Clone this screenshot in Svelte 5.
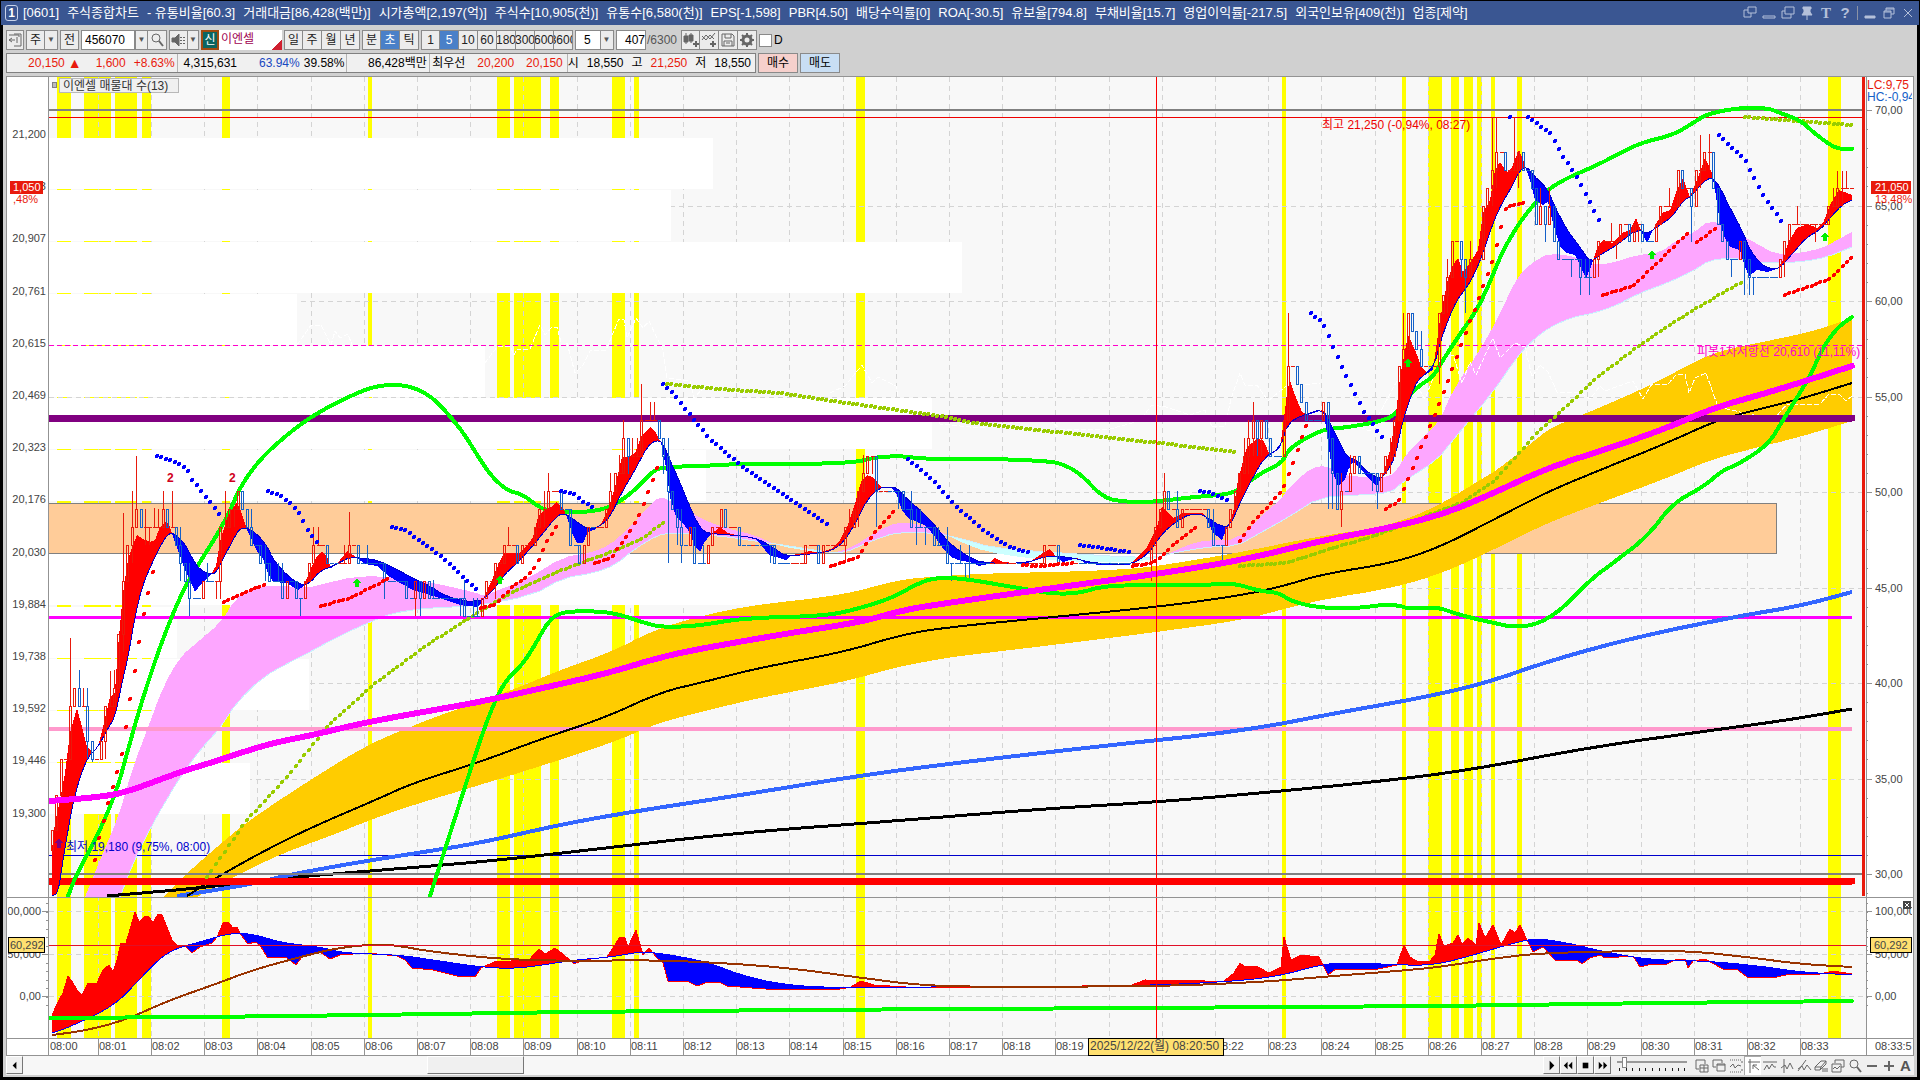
<script lang="ts">
  type Point = [number, number];

  const parse = (text: string): Point[] =>
    text.trim().split(/\s+/).map((pair) => pair.split(",").map(Number) as Point);
  const join = (points: Point[]) => points.map((p) => p.join(",")).join(" ");

  // Cuts the corners twice, so that long averages bend softly.
  const smooth = (points: Point[], rounds = 2): Point[] => {
    if (rounds === 0) return points;
    const result: Point[] = [points[0]];
    for (let i = 1; i < points.length; i++) {
      const [x0, y0] = points[i - 1];
      const [x1, y1] = points[i];
      result.push([x0 * 0.75 + x1 * 0.25, y0 * 0.75 + y1 * 0.25]);
      result.push([x0 * 0.25 + x1 * 0.75, y0 * 0.25 + y1 * 0.75]);
    }
    result.push(points[points.length - 1]);
    return smooth(result, rounds - 1);
  };
  const curve = (text: string) => join(smooth(parse(text)));

  const at = (points: Point[], x: number) => {
    if (x <= points[0][0]) return points[0][1];
    for (let i = 1; i < points.length; i++) {
      const [x0, y0] = points[i - 1];
      const [x1, y1] = points[i];
      if (x <= x1) return y0 + ((y1 - y0) * (x - x0)) / (x1 - x0);
    }
    return points[points.length - 1][1];
  };

  // Areas between a fast and a slow line: one where fast is above, one where it is below.
  const ribbon = (fast: Point[], slow: Point[]) => {
    const up: string[] = [];
    const down: string[] = [];
    const base: string[] = [];
    for (let x = fast[0][0]; x <= 1852; x += 1) {
      const f = at(fast, x);
      const s = at(slow, x);
      up.push(`${x},${Math.min(f, s).toFixed(1)}`);
      down.push(`${x},${Math.max(f, s).toFixed(1)}`);
      base.unshift(`${x},${s.toFixed(1)}`);
    }
    return {
      up: [...up, ...base].join(" "),
      down: [...down, ...base].join(" "),
    };
  };

  const STEP = 4.43;
  const dots = (text: string): Point[] => {
    const points = parse(text);
    const result: Point[] = [];
    for (let x = points[0][0]; x <= points[points.length - 1][0] + 1; x += STEP) {
      result.push([Math.round(x), Math.round(at(points, x))]);
    }
    return result;
  };

  const fast = parse(`52,850 55,823 60,800 65,773 70,733 77,708 82,727 87,747 92,752 98,747 103,727 110,697 115,692 118,647 123,593 128,560
    133,545 137,535 143,539 150,542 155,540 160,527 166,521 170,527 175,542 180,556 185,570 190,580 195,592 198,588 205,580 210,576 216,566 220,542
    227,518 233,508 237,502 242,514 248,532 257,551 263,559 268,573 273,582 287,583 293,587 298,590 303,587 308,576 312,566 317,556 322,552 327,556
    331,568 337,564 347,551 353,555 365,564 377,566 390,577 400,583 413,590 433,596 460,605 477,607 481,603 485,595 492,580 499,563 504,553 511,553
    519,553 526,547 533,537 538,517 544,510 551,507 556,502 563,508 567,517 572,533 577,543 583,543 588,532 594,530 602,522 608,510 615,487 622,457
    629,457 635,453 642,435 651,427 656,433 661,443 666,467 670,497 676,517 683,523 690,533 695,547 700,552 704,543 710,535 720,527 728,533 744,537
    754,538 761,545 769,555 786,560 792,555 804,553 810,551 819,553 831,549 840,540 847,527 854,507 861,482 867,475 874,478 881,487 892,488 897,495
    902,510 908,518 917,522 926,526 935,537 942,547 951,557 961,561 970,562 979,566 988,564 995,558 1003,562 1027,564 1040,555 1050,549 1057,558
    1063,562 1077,558 1085,563 1100,565 1130,565 1137,557 1147,547 1157,527 1162,506 1168,513 1173,518 1183,513 1193,513 1203,513 1208,522 1213,533
    1222,540 1227,528 1233,513 1238,480 1247,447 1257,439 1263,440 1270,455 1280,448 1283,427 1287,393 1290,380 1295,395 1302,412 1308,415 1323,410
    1327,433 1332,470 1338,486 1345,480 1348,470 1353,462 1360,468 1367,477 1377,486 1383,475 1390,450 1395,423 1400,377 1408,335 1415,350 1422,368
    1428,373 1433,370 1440,320 1447,283 1453,265 1458,258 1463,272 1472,260 1478,250 1483,213 1490,200 1495,170 1500,162 1507,172 1512,167 1519,150
    1525,165 1530,180 1535,200 1543,205 1548,202 1553,223 1560,247 1567,253 1575,255 1582,270 1586,278 1591,267 1597,248 1603,240 1613,243 1622,233
    1630,230 1636,218 1642,233 1647,243 1653,230 1662,213 1670,210 1677,190 1683,178 1690,197 1697,180 1705,158 1712,173 1715,190 1720,223 1725,238
    1730,247 1740,250 1745,267 1749,276 1757,270 1767,272 1777,269 1783,260 1788,243 1797,228 1808,224 1817,228 1823,223 1830,205 1839,190 1847,193 1852,195`);
  const slow = smooth(parse(`52,896 58,893 63,860 72,807 80,777 88,757 98,747 107,730 115,717 122,683 128,657 135,617 142,587 152,563 160,547 167,535 172,533
    178,537 185,544 192,558 200,570 212,575 217,571 223,559 233,540 240,528 248,528 258,535 267,546 273,559 282,570 293,580 302,585 310,583 320,571
    333,566 350,557 360,558 377,560 390,566 413,578 430,586 447,597 477,603 492,592 504,575 517,563 531,548 544,532 556,517 563,513 572,518 581,525
    590,530 602,525 611,515 622,492 635,470 647,447 656,440 663,443 669,458 679,480 690,507 697,522 704,532 715,534 744,536 761,540 772,547 786,556
    801,555 819,553 831,551 844,542 856,522 867,500 879,488 890,487 897,488 908,500 920,510 933,523 944,537 954,547 969,557 983,563 1027,563 1043,557
    1057,556 1073,558 1093,563 1130,565 1147,555 1160,537 1168,528 1183,517 1197,513 1207,517 1220,526 1230,526 1240,503 1253,477 1265,457 1280,448
    1288,423 1303,415 1323,409 1330,423 1340,443 1347,457 1357,460 1367,472 1380,479 1387,472 1395,457 1403,420 1412,393 1418,380 1428,372 1435,363
    1440,343 1448,320 1457,300 1467,287 1475,273 1483,253 1493,223 1502,203 1510,190 1520,170 1527,167 1533,175 1547,188 1555,207 1567,230 1580,247
    1590,262 1600,255 1617,245 1637,229 1647,234 1660,225 1672,217 1683,201 1693,195 1702,183 1712,177 1720,187 1730,208 1742,230 1750,250 1760,263
    1770,269 1780,268 1793,253 1807,237 1820,230 1830,218 1842,205 1852,200`), 1);
  const pinkFast = smooth(parse(`85,897 100,860 118,818 133,767 147,730 163,687 180,657 200,640 220,623 237,597 253,588 273,585 307,588 327,583 353,577 377,576
    410,579 443,585 477,593 483,596 504,588 529,578 563,557 590,553 610,545 629,528 647,508 660,496 672,502 690,512 708,522 733,530 754,535 779,546 808,551
    833,553 851,548 876,532 897,522 919,524 940,531 960,542 987,552 1027,558 1060,561 1127,563 1160,558 1187,545 1207,540 1237,540 1260,517 1280,500
    1293,483 1313,467 1327,466 1340,475 1377,478 1390,476 1397,470 1407,453 1427,433 1440,420 1453,390 1480,350 1497,320 1517,277 1533,262 1550,253 1577,257
    1590,265 1613,263 1637,255 1660,253 1677,240 1693,233 1710,220 1727,227 1750,240 1777,255 1800,253 1823,248 1837,240 1852,232`), 1);
  const pinkSlow = smooth(parse(`85,990 120,897 133,863 153,823 180,777 200,750 220,728 237,702 263,677 290,662 310,652 337,637 370,622 393,613 427,608 477,606
    533,595 563,578 594,573 615,565 636,548 658,535 672,533 722,536 761,542 790,546 826,552 844,553 869,542 897,532 933,533 960,538 993,548 1060,553
    1127,557 1160,557 1173,553 1207,547 1237,546 1260,533 1287,518 1320,497 1360,495 1390,493 1403,482 1437,460 1453,440 1493,392 1517,357 1533,340
    1550,327 1573,317 1590,314 1613,307 1640,293 1667,283 1693,271 1710,260 1733,258 1753,262 1783,263 1807,261 1827,257 1852,247`), 1);
  const goldTop = smooth(parse(`163,897 187,873 233,833 260,813 310,780 367,745 410,727 443,714 486,700 529,683 563,669 611,652 654,630 704,615 754,605 844,595 897,580
    940,576 1000,573 1060,572 1133,569 1170,564 1237,553 1320,536 1377,528 1410,518 1443,503 1480,480 1497,470 1533,442 1550,428 1587,413 1647,387 1683,368
    1713,353 1747,345 1787,337 1817,330 1852,318`));
  const goldBottom = smooth(parse(`197,897 233,877 283,853 333,835 370,820 413,805 480,785 563,759 619,740 658,723 701,712 758,698 844,682 897,667 940,659 960,656 1053,645
    1157,632 1243,620 1280,610 1320,600 1393,588 1443,573 1493,550 1547,523 1600,503 1667,478 1710,460 1747,450 1800,437 1852,421`));
  const goldArea = join([...goldTop, ...[...goldBottom].reverse()]);

  const lines = [
    { color: "#000", width: 3, points: "107,896 200,888 283,878 370,871 480,862 563,853 735,833 894,821 1041,809 1157,802 1261,793 1384,781 1470,770 1592,747 1714,730 1788,720 1852,709" },
    { color: "#36f", width: 4, points: "177,896 247,885 293,874 360,862 417,853 480,843 563,824 637,811 735,796 857,776 955,763 1102,746 1243,731 1347,711 1410,700 1480,685 1555,659 1641,636 1739,616 1800,606 1852,592" },
    { color: "#000", width: 2, points: "187,896 207,883 260,853 310,828 380,798 413,783 480,762 544,738 604,718 661,692 704,682 758,668 844,652 897,636 940,628 1053,617 1157,607 1237,596 1280,587 1323,574 1393,563 1440,547 1493,520 1547,492 1600,470 1667,443 1713,422 1747,412 1797,400 1852,383" },
  ];
  const greenUpper = `68,896 77,873 97,837 117,790 127,753 143,697 163,638 183,590 200,562 217,535 230,511 240,487 260,459 290,432 320,411 363,390 383,385 403,385
    417,389 430,396 443,408 463,432 479,458 492,477 508,491 522,494 540,508 554,512 590,512 611,507 633,492 651,473 661,467 704,466 733,464 815,464 858,462
    876,457 904,456 922,459 1000,459 1043,461 1060,463 1080,473 1103,498 1127,502 1153,502 1193,497 1233,494 1247,483 1263,472 1282,463 1290,447 1323,429
    1343,428 1383,421 1397,413 1408,397 1420,385 1433,377 1443,360 1460,334 1477,310 1490,282 1503,250 1523,217 1547,190 1567,178 1593,167 1617,155 1640,143
    1673,135 1693,123 1707,114 1737,108 1768,108 1780,113 1800,120 1813,132 1830,145 1840,149 1852,149`;
  const greenLower = `430,896 447,843 480,740 494,703 506,680 522,665 535,645 547,623 560,612 590,611 615,613 651,625 665,627 697,626 744,618 826,616 861,608
    894,597 915,585 933,578 960,578 1013,587 1053,594 1080,593 1107,585 1210,585 1233,583 1260,591 1280,593 1290,601 1320,608 1360,608 1380,605 1397,605
    1410,609 1437,607 1457,614 1480,620 1522,629 1555,616 1590,580 1613,563 1647,537 1673,503 1703,487 1723,470 1737,465 1768,445 1783,420 1800,393
    1813,370 1823,347 1838,327 1852,317`;
  const magenta = `50,801 100,797 127,792 180,772 210,763 243,752 273,743 317,734 363,723 417,713 480,702 565,683 608,673 661,657 704,648 790,633 861,622
    904,610 940,604 1060,587 1157,574 1243,560 1320,541 1393,527 1440,515 1483,498 1547,468 1613,447 1667,428 1713,408 1777,390 1852,366`;
  const whiteLines = [
    "297,345 311,325 321,325 331,345 335,331 340,338 348,334 352,345",
    "485,363 497,347 510,346 514,355 517,349 530,349 540,325 545,335 552,327 557,327 562,346 567,343 575,373 583,365 590,351 606,350 619,319 624,320 627,338 636,318 643,328 649,321 658,340 663,350 667,378 690,381 694,398 706,385 745,395",
    "830,393 845,386 862,365 872,383 878,377 896,386 898,396",
    "935,417 940,424 980,428 1000,424 1030,421 1034,419 1050,420 1060,429 1110,429 1132,423 1140,420 1152,405 1166,407 1190,415 1205,410 1212,427 1225,426 1231,399 1240,373 1245,385 1257,385 1268,401 1285,387 1305,385 1320,383",
  ];
  const whiteFront = "1340,420 1370,431 1405,366 1425,399 1440,360 1453,355 1462,383 1470,362 1476,375 1493,338 1500,358 1515,343 1525,347 1532,377 1540,365 1548,372 1557,392 1580,392 1590,399 1600,386 1605,391 1633,381 1643,399 1652,384 1668,384 1677,374 1685,374 1689,393 1695,378 1706,373 1718,407 1740,412 1747,421 1752,414 1760,418 1775,418 1787,404 1820,404 1829,394 1840,395 1846,401 1852,396";

  const blueDots = [
    "157,456 167,459 180,464 188,471 192,479 206,497 219,514",
    "268,491 281,496 290,503 299,513 308,530 317,542",
    "392,527 405,530 420,541 437,553 455,569 477,590",
    "561,491 574,494 583,502 594,508",
    "663,384 672,392 690,415 711,440 744,468 779,492 828,525",
    "908,459 933,480 958,508 987,533 1010,547 1027,552",
    "1080,545 1130,552",
    "1200,491 1212,493 1226,500",
    "1311,313 1323,323 1342,367 1363,410 1382,437",
    "1510,117 1511,117",
    "1528,117 1550,133 1563,156 1577,177 1600,222",
    "1719,135 1745,160 1763,195 1782,222",
  ].flatMap(dots);
  const redDots = [
    "95,860 99,840 108,804 121,758 135,670 144,612 153,570",
    "224,602 263,585",
    "321,606 350,598 388,579",
    "481,608 495,605 511,588 526,577 535,567 547,542 556,527",
    "595,563 611,558 633,527 641,512 658,465",
    "831,566 858,557 872,536 894,511",
    "1023,565 1040,566 1075,563",
    "1133,566 1152,563 1160,558 1173,545 1195,528",
    "1240,541 1253,522 1272,502 1283,489 1293,463 1306,426",
    "1386,509 1399,501 1408,479 1430,427 1448,381 1467,330 1483,287 1493,260 1506,207 1524,203",
    "1603,295 1633,286 1653,267 1688,233",
    "1697,242 1715,229",
    "1785,295 1813,285 1830,279 1852,257",
  ].flatMap(dots);
  const oliveDots = [
    "207,877 247,820 287,777 327,727 373,685 427,645 477,613 511,593 554,573 611,552 640,540 663,523",
    "667,384 719,389 779,393 861,405 940,416 973,423 1057,432 1120,439 1160,443 1235,452",
    "1240,566 1287,563 1320,552 1377,535 1463,502 1493,482 1533,437 1560,412 1600,375 1647,340 1693,310 1742,282",
    "1745,117 1852,125",
  ].flatMap(dots);

  // Extremes of single bars: x, high or low.
  const spikes = parse(`69,638 78,677 109,671 122,513 131,491 135,456 155,508 162,491 170,491 225,491 238,491 348,512 642,384 651,402 867,456 1288,313
    1404,313 1408,313 1494,117 1498,117 1515,117 1701,135 1839,171 1844,171`);
  const dips = parse(`69,750 93,762 190,602 300,606 482,610 578,563 667,563 695,563 770,563 876,527 1328,509 1334,509 1464,313 1582,295 1589,295 1745,295
    1751,295 1692,242`);

  const LEVEL = 17.85;
  const snap = (y: number) => 491.3 + Math.round((y - 491.3) / LEVEL) * LEVEL;
  const noise = (i: number) => {
    const v = Math.sin(i * 12.9898) * 43758.5453;
    return v - Math.floor(v);
  };
  let previous = 850;
  const candles = Array.from({ length: 407 }, (_, i) => {
    const x = Math.round(52 + i * STEP);
    const f = at(fast, x);
    const s = at(slow, x);
    const quiet = Math.abs(f - s) < 5;
    const close = snap(f + (f - s) * 0.3 + (noise(i) - 0.5) * (quiet ? 6 : 18));
    const open = previous;
    previous = close;
    const top = Math.round(Math.min(open, close));
    const bottom = Math.round(Math.max(open, close));
    let high = !quiet && noise(i + 500) > 0.72 ? top - 18 : top;
    let low = !quiet && noise(i + 900) > 0.78 ? bottom + 18 : bottom;
    const spike = spikes.find(([px]) => Math.abs(px - x) <= 2);
    const dip = dips.find(([px]) => Math.abs(px - x) <= 2);
    if (spike) high = Math.min(high, spike[1]);
    if (dip) low = Math.max(low, dip[1]);
    low = Math.min(low, 895);
    const rising = close < open || (close === open && f <= s);
    return { x, top, bottom, high, low, rising };
  }).filter((c) => c.bottom < 896);

  const price = ribbon(fast, slow);
  const pink = ribbon(pinkFast, pinkSlow);

  const subFast = parse(`52,1015 58,1002 63,993 68,976 73,983 77,990 82,995 88,983 97,983 103,970 109,965 113,972 117,960 121,943 126,943 135,912 139,922
    145,916 149,917 153,923 158,914 162,915 167,927 172,940 177,945 185,946 192,953 200,947 212,943 217,937 223,923 228,922 233,928 237,927 241,935
    248,944 255,942 260,945 267,957 287,958 296,965 302,957 320,952 330,959 340,955 367,953 397,956 405,960 412,968 433,970 457,976 475,977 481,968 494,962
    529,960 539,949 545,954 555,948 564,955 574,964 583,960 607,957 620,937 625,938 628,947 636,930 643,955 649,948 657,958 663,963 668,981 689,982 697,986
    708,982 721,983 727,986 765,989 835,990 851,987 861,981 874,985 906,987 982,988 1132,985 1145,980 1205,981 1224,981 1234,973 1240,963 1245,967 1256,966
    1269,973 1281,967 1284,937 1291,960 1301,955 1319,957 1328,975 1336,969 1378,969 1397,965 1404,945 1410,957 1418,962 1430,961 1435,955 1439,934
    1444,946 1453,943 1458,935 1462,944 1468,938 1476,945 1479,923 1485,938 1493,925 1501,945 1510,929 1515,933 1520,925 1527,940 1533,952 1543,947
    1555,960 1577,960 1582,964 1590,958 1600,955 1605,958 1633,956 1640,967 1652,964 1667,964 1677,959 1685,959 1688,968 1693,961 1705,959 1723,969
    1738,970 1747,977 1777,977 1790,974 1820,974 1833,971 1852,974`);
  const subSlow = smooth(parse(`52,1033 67,1028 100,1013 120,1000 137,982 160,958 177,948 200,942 230,933 253,934 283,943 320,947 343,953 400,955 433,960 480,967 517,969
    574,960 612,957 638,952 660,953 708,962 740,975 784,985 842,988 912,987 1135,986 1224,982 1275,977 1320,965 1339,963 1384,964 1432,966 1477,954
    1500,947 1530,939 1543,939 1573,944 1600,951 1650,960 1707,961 1760,966 1800,972 1852,975`));
  const sub = ribbon(subFast, subSlow);
  const brown = `52,1035 83,1031 123,1021 170,1000 213,985 253,970 300,957 337,948 377,944 400,946 427,951 497,959 568,961 657,960 740,964 797,969 855,977
    925,986 1014,987 1161,986 1218,984 1275,981 1333,976 1397,971 1440,967 1490,959 1540,953 1633,951 1690,951 1747,957 1800,964 1852,967`;

  const stripes: Point[] = [
    [57, 14], [84, 27], [115, 22], [142, 9], [222, 8], [368, 4], [497, 13], [514, 27], [550, 9],
    [612, 13], [634, 5], [856, 9], [1282, 4], [1402, 4], [1428, 14], [1451, 8], [1464, 9],
    [1477, 5], [1491, 4], [1517, 5], [1828, 13],
  ];
  // Volume per price band: top and right edge.
  const volumes: Point[] = [
    [138, 713], [190, 671], [242, 962], [294, 297], [346, 485], [398, 932], [450, 706],
    [554, 1401], [607, 177], [659, 309], [711, 200], [763, 250],
  ];

  const times = Array.from({ length: 34 }, (_, i) => ({
    x: i === 0 ? 49 : i === 1 ? 98 : Math.round(151 + (i - 2) * 53.2),
    label: "08:" + String(i).padStart(2, "0"),
  }));
  const shownTimes = times.filter((_, i) => i !== 20 && i !== 21);
  const levels = Array.from({ length: 9 }, (_, i) => ({
    y: Math.round(110 + i * 95.5),
    label: `${70 - i * 5},00`,
  }));
  const priceLabels = ["21,200", "21,053", "20,907", "20,761", "20,615", "20,469", "20,323", "20,176", "20,030", "19,884", "19,738", "19,592", "19,446", "19,300"];
  const arrows: Point[] = [[357, 583], [500, 580], [1408, 363], [1652, 255], [1825, 237]];
  const subTicks = Array.from({ length: 13 }, (_, i) => 903 + Math.round(i * 8.5));

  const titles = [
    "[0601]", "주식종합차트", "- 유통비율[60.3]", "거래대금[86,428(백만)]", "시가총액[2,197(억)]", "주식수[10,905(천)]", "유통수[6,580(천)]",
    "EPS[-1,598]", "PBR[4.50]", "배당수익률[0]", "ROA[-30.5]", "유보율[794.8]", "부채비율[15.7]", "영업이익률[-217.5]", "외국인보유[409(천)]", "업종[제약]",
  ];
  let period = "초";
  let interval = "5";
  let code = "456070";
  let count = "407";
  let day = false;
  let speed = 8;
</script>

<div class="window">
  <header class="title">
    <span class="badge">1</span>
    <h1>{#each titles as item}<span>{item}</span>{/each}</h1>
    <div class="winButtons">
      <button aria-label="복제"><svg viewBox="0 0 14 14"><path d="M5 1h8v6H5zM5 4H1v7h7V7" /></svg></button>
      <button aria-label="숨김"><svg viewBox="0 0 14 14"><path d="M1 10h12v2H1z" /></svg></button>
      <button aria-label="겹치기"><svg viewBox="0 0 14 14"><path d="M4 1h9v7H4zM4 5H1v7h9V8" /></svg></button>
      <button aria-label="고정"><svg viewBox="0 0 14 14"><path class="solid" d="M3 1h8v2h-1v3l2 3H2l2-3V3H3z" /><path d="M7 9v5" /></svg></button>
      <button class="letter serif" aria-label="글꼴">T</button>
      <button class="letter" aria-label="도움말">?</button>
      <i></i>
      <button aria-label="최소화"><svg viewBox="0 0 14 14"><path class="solid" d="M2 10h10v2H2z" /></svg></button>
      <button aria-label="이전 크기"><svg viewBox="0 0 14 14"><path d="M4 5V2h8v6h-3M2 5h7v7H2zM2 6h7M4 3h8" /></svg></button>
      <button aria-label="닫기"><svg viewBox="0 0 14 14"><path d="M3 3l8 8M11 3l-8 8" /></svg></button>
    </div>
  </header>

  <main>
    <div class="toolbar">
      <button class="tool panel" aria-label="패널"><svg viewBox="0 0 16 16"><path d="M7 2h7v12H7M2 3h10v2M10 5v6M8 8H2M5 6L2 8l3 2" /></svg></button>
      <span class="group"><button class="tool">주</button><button class="tool arrow" aria-label="종목 구분">▼</button></span>
      <button class="tool">전</button>
      <span class="group"><input class="code" aria-label="종목코드" bind:value={code} /><button class="tool arrow" aria-label="최근 종목">▼</button><button class="tool" aria-label="검색"><svg viewBox="0 0 16 16"><circle cx="7" cy="6" r="4" /><path d="M10 9l4 5" stroke-width="2" /></svg></button></span>
      <span class="group"><button class="tool" aria-label="음성"><svg viewBox="0 0 16 16"><path class="solid" d="M1 6h3l4-4v12l-4-4H1z" /><path d="M10 5v1M10 8v1M10 11v1M13 5v1M13 8v1M13 11v1" stroke-width="2" /></svg></button><button class="tool arrow slim" aria-label="음성 설정">▼</button></span>
      <span class="name"><b>신</b><span>이엔셀</span></span>
      <span class="group periods">
        {#each ["일", "주", "월", "년"] as p}<button class="tool" class:on={period === p} on:click={() => (period = p)}>{p}</button>{/each}
      </span>
      <span class="group periods">
        {#each ["분", "초", "틱"] as p}<button class="tool" class:on={period === p} on:click={() => (period = p)}>{p}</button>{/each}
      </span>
      <span class="group periods">
        {#each ["1", "5", "10", "60", "180", "300", "600", "3600"] as p}<button class="tool" class:on={interval === p} on:click={() => (interval = p)}>{p}</button>{/each}
      </span>
      <label class="drop"><select aria-label="간격"><option>5</option></select></label>
      <label class="count"><input aria-label="봉 개수" bind:value={count} />/6300</label>
      <span class="group">
        <button class="tool" aria-label="차트 종류"><svg viewBox="0 0 16 16"><path class="solid" d="M1 4h4v6H1zM6 3h4v6H6z" /><path d="M3 1v11M8 1v10" /><path d="M13 9v6M10 12h6" stroke-width="2" /></svg></button>
        <button class="tool" aria-label="지표 추가"><svg viewBox="0 0 16 16"><path d="M1 8l4-5 4 4 5-6M1 4l4 4 4-5 4 4" /><path d="M12 9v6M9 12h6" stroke-width="2" /></svg></button>
        <button class="tool" aria-label="저장"><svg viewBox="0 0 16 16"><path d="M2 2h10l2 2v10H2zM5 2v4h6V2M4 14V9h8v5M6 11h4" /></svg></button>
        <button class="tool" aria-label="설정"><svg viewBox="0 0 16 16"><circle cx="8" cy="8" r="4" stroke-width="3" /><path d="M8 1v3M8 12v3M1 8h3M12 8h3M3 3l2 2M11 11l2 2M3 13l2-2M11 5l2-2" stroke-width="2" /></svg></button>
      </span>
      <label class="check"><input type="checkbox" bind:checked={day} />D</label>
    </div>

    <div class="quotes">
      <div class="cells">
        <p class="cell c1 red"><span>20,150</span><span class="tri">▲</span><span>1,600</span><span>+8.63%</span></p>
        <p class="cell c2"><span>4,315,631</span><span class="blue">63.94%</span><span>39.58%</span></p>
        <p class="cell c3"><span>86,428백만</span></p>
        <p class="cell c4"><span>최우선</span><span class="red">20,200</span><span class="red">20,150</span></p>
        <p class="cell c5"><span>시</span><span>18,550</span><span>고</span><span class="red">21,250</span><span>저</span><span>18,550</span></p>
      </div>
      <button class="order buy">매수</button>
      <button class="order sell">매도</button>
    </div>

    <svg class="chart" viewBox="6 76 1908 980" preserveAspectRatio="none" role="img" aria-label="이엔셀 5초 차트">
      <defs>
        <clipPath id="plot"><rect x="49" y="77" width="1817" height="820" /></clipPath>
        <clipPath id="axis"><rect x="8" y="77" width="1904" height="979" /></clipPath>
      </defs>
      <rect x="6" y="76" width="1908" height="980" fill="#fff" />
      <rect x="49" y="76" width="1817" height="962" fill="#f8f8f8" />
      <g fill="#ff0">
        {#each stripes as [x, width]}<rect {x} y="77" {width} height="961" />{/each}
      </g>
      <g class="grid">
        {#each times.slice(1) as t}<path d="M{t.x}.5 77V1038" />{/each}
        {#each levels.slice(1, 8) as l}<path d="M49 {l.y}.5H1863" />{/each}
        <path d="M49 911.5H1863M49 954.5H1863M49 996.5H1863" />
      </g>

      <g clip-path="url(#plot)">
        {#each volumes as [y, x]}<rect x="49" {y} width={x - 49} height="51" fill="#fff" />{/each}
        <rect x="40" y="503" width="1736" height="50" fill="#fc9" stroke="#808080" />
        {#each whiteLines as points}<polyline {points} class="white" />{/each}
        <path d="M49 855.5H1863" stroke="#00c" />
        <polygon points={pink.down} fill="#cff" />
        <polygon points={pink.up} fill="#fda6ff" />
        <polyline points={join(pinkSlow)} stroke="#cef" fill="none" />
        <polygon points={goldArea} fill="#fc0" />
        <polyline points={whiteFront} class="white" />
        <path d="M49 617H1852" stroke="#f0f" stroke-width="3" />
        <path d="M49 729H1852" stroke="#f9c" stroke-width="4" />
        {#each lines as line}<polyline points={curve(line.points)} fill="none" stroke={line.color} stroke-width={line.width} />{/each}
        <path d="M49 418H1852" stroke="#800080" stroke-width="7" stroke-linecap="round" />
        <path d="M49 110H1863M49 874H1863" stroke="#808080" stroke-width="2" />
        <path d="M49 117.5H1863" stroke="#e00" />
        <path d="M49 345.5H1863" stroke="#f0c" stroke-dasharray="5 3" />
        <path d="M49 881H1852" stroke="#f00" stroke-width="7" stroke-linecap="round" />
        <g fill="#9c0">{#each oliveDots as [cx, cy]}<circle {cx} {cy} r="2" />{/each}</g>
        <polyline points={curve(greenUpper)} class="green" />
        <polygon points={price.up} fill="#f00" />
        <polygon points={price.down} fill="#00f" />
        <polyline points={join(slow)} fill="none" stroke="#00c" />
        {#each candles as c}
          <path
            d={c.bottom - c.top > 3
              ? `M${c.x}.5 ${c.high}V${c.top}M${c.x}.5 ${c.bottom}V${c.low}M${c.x - 1}.5 ${c.top}.5h2V${c.bottom}.5h-2z`
              : `M${c.x}.5 ${c.high}V${c.low}M${c.x - 1} ${c.top}.5h4`}
            fill="none"
            stroke={c.rising ? "#e81a0c" : "#1460c8"}
          />
        {/each}
        <g fill="#f00">{#each redDots as [cx, cy]}<circle {cx} {cy} r="2" />{/each}</g>
        <g fill="#00f">{#each blueDots as [cx, cy]}<circle {cx} {cy} r="2" />{/each}</g>
        <polyline points={curve(greenLower)} class="green" />
        <polyline points={curve(magenta)} fill="none" stroke="#f0f" stroke-width="6" stroke-linecap="round" stroke-linejoin="round" />
        {#each arrows as [x, y]}<path d="M{x} {y - 4}l5 4h-3v4h-4v-4h-3z" fill="#0e0" />{/each}
        <path d="M59 839l5 4h-3v5h-4v-5h-3z" fill="#800080" />
        <g class="note">
          <text x="167" y="482" class="two">2</text>
          <text x="229" y="482" class="two">2</text>
          <text x="66" y="851" fill="#00c">최저 19,180 (9,75%, 08:00)</text>
          <text x="1322" y="129" fill="#e00">최고 21,250 (-0,94%, 08:27)</text>
          <text x="1697" y="356" fill="#f0c">피봇1차저항선 20,610 (11,11%)</text>
        </g>
        <path d="M1863.5 77V896" stroke="#e81a0c" stroke-width="3" />
      </g>

      <g fill="none">
        <polygon points={sub.up} fill="#f00" />
        <polygon points={sub.down} fill="#00f" />
        <polyline points={join(subFast)} stroke="#f00" />
        <polyline points={join(subSlow)} stroke="#00f" />
        <polyline points={curve(brown)} stroke="#930" stroke-width="2" />
        <path d="M49 945.5H1866" stroke="#e01028" />
        <polyline points="50,1018 200,1017 290,1016 440,1014 570,1012 797,1010 1141,1008 1440,1006 1660,1003 1852,1001" class="green" />
      </g>
      <path d="M1156.5 77V1038" stroke="#f00" />

      <rect x="52.5" y="82.5" width="4" height="5" fill="#bbb" stroke="#808080" />
      <rect x="59.5" y="78.5" width="119" height="14" fill="#f0f0f0" stroke="#b8b8b8" />
      <text x="63" y="90" fill="#333" class="note">이엔셀 매물대 수(13)</text>

      <g stroke="#939393" fill="none">
        <path d="M6.5 1056V76.5H1913.5V1056M48.5 76V1056M1866.5 76V1056M6 897.5H1914M6 1038.5H1914M6 1055.5H1914" />
        {#each times.slice(1) as t}<path d="M{t.x}.5 1038V1056" />{/each}
        {#each levels as l}<path d="M1866 {l.y}.5h6M1866 {l.y + 19}.5h2M1866 {l.y + 38}.5h2M1866 {l.y + 57}.5h2M1866 {l.y + 76}.5h2" />{/each}
        {#each subTicks as y}<path d="M46 {y}.5h3M1866 {y}.5h2" />{/each}
        <path d="M42 911.5h7M42 954.5h7M42 996.5h7M1866 911.5h6M1866 954.5h6M1866 996.5h6" />
      </g>

      <g clip-path="url(#axis)" fill="#444">
        {#each priceLabels as label, i}<text x="46" y={138 + Math.round(i * 52.2)} text-anchor="end">{label}</text>{/each}
        {#each levels as l}<text x="1875" y={l.y + 4}>{l.label}</text>{/each}
        <text x="41" y="915" text-anchor="end">100,000</text>
        <text x="41" y="958" text-anchor="end">50,000</text>
        <text x="41" y="1000" text-anchor="end">0,00</text>
        <text x="1875" y="915">100,000</text>
        <text x="1875" y="958">50,000</text>
        <text x="1875" y="1000">0,00</text>
        {#each shownTimes as t}<text x={t.x + 1} y="1050">{t.label}</text>{/each}
        <text x="1875" y="1050">08:33:5</text>
        <g class="note">
          <text x="1867" y="89" fill="#e81a0c">LC:9,75</text>
          <text x="1867" y="101" fill="#1460c8">HC:-0,94</text>
        </g>
        <text x="13" y="203" fill="#e81a0c">,48%</text>
        <text x="1875" y="203" fill="#e81a0c">13,48%</text>
      </g>
      <rect x="10" y="181" width="33" height="13" fill="#e81a0c" />
      <text x="13" y="191" fill="#fff">1,050</text>
      <rect x="1871" y="181" width="40" height="13" fill="#e81a0c" />
      <text x="1875" y="191" fill="#fff">21,050</text>
      <g fill="#ffe070" stroke="#000">
        <rect x="8.5" y="937.5" width="36" height="15" />
        <rect x="1870.5" y="937.5" width="41" height="15" />
        <rect x="1088.5" y="1038.5" width="135" height="17" />
      </g>
      <g fill="#444">
        <text x="10" y="949">60,292</text>
        <text x="1874" y="949">60,292</text>
        <text x="1090" y="1050" class="note">2025/12/22(월) 08:20:50</text>
      </g>
      <path d="M1903 901h8v8h-8z" fill="#444" />
      <path d="M1905 903l4 4m0-4l-4 4" stroke="#fff" />
    </svg>

    <footer>
      <button class="raised" aria-label="왼쪽으로"><svg viewBox="0 0 16 16"><path d="M10 4v8L6 8z" /></svg></button>
      <div class="track"><div class="thumb"></div></div>
      <button class="raised" aria-label="재생"><svg viewBox="0 0 16 16"><path d="M6 3v10l5-5z" /></svg></button>
      <button class="raised" aria-label="뒤로"><svg viewBox="0 0 16 16"><path d="M7 4v8L3 8zM12 4v8L8 8z" /></svg></button>
      <button class="raised" aria-label="정지"><svg viewBox="0 0 16 16"><path d="M5 5h6v6H5z" /></svg></button>
      <button class="raised" aria-label="앞으로"><svg viewBox="0 0 16 16"><path d="M4 4v8l4-4zM9 4v8l4-4z" /></svg></button>
      <label class="speed"><input type="range" aria-label="재생 속도" min="0" max="100" bind:value={speed} /><svg viewBox="0 0 70 4" preserveAspectRatio="none"><path d="M2.5 0v4M9.5 0v4M15.5 0v4M22.5 0v4M28.5 0v4M35.5 0v4M42.5 0v4M48.5 0v4M55.5 0v4M61.5 0v4M67.5 0v4" /></svg></label>
      <div class="marks">
        <button aria-label="창 추가"><svg viewBox="0 0 16 16"><path d="M5 11H2V2h9v4M6 7h8v7H6zM10 7v7M6 10h8" /></svg></button>
        <button aria-label="창 겹치기"><svg viewBox="0 0 16 16"><path d="M5 9H2V2h9v3M6 6h8v7H6zM6 7h8" /></svg></button>
        <button aria-label="영역"><svg viewBox="0 0 16 16"><path d="M2 2h12M2 14h12" stroke-dasharray="1 1" /><path d="M2 9l3-3 2 4 3-3 3 1M14 3v2M14 11v2" /></svg></button>
        <button class="pressed" aria-label="추적"><svg viewBox="0 0 16 16"><path d="M3 4h12M5 1v14M14 12L8 7M8 7v4M8 7h4" /></svg></button>
        <button aria-label="추세선"><svg viewBox="0 0 16 16"><path d="M1 4h14M2 12l3-5 2 4 3-5 2 3h2" /></svg></button>
        <button aria-label="수직선"><svg viewBox="0 0 16 16"><path d="M5 1v14M2 10l4-3 2 4 3-6 3 6" /></svg></button>
        <button aria-label="대각선"><svg viewBox="0 0 16 16"><path d="M2 13L10 2M2 11l4-3 2 4 3-5 4 5" /></svg></button>
        <button aria-label="지우기"><svg viewBox="0 0 16 16"><path d="M2 9l6-6h5l-5 6zM2 9v3h5l6-6V3M8 9l-1 3M10 10v4M12 10v4M14 10v4" /></svg></button>
        <button aria-label="차트 복사"><svg viewBox="0 0 16 16"><path d="M5 5V2h9v7h-3M2 6h9v8H2zM3 11l2-2 2 2 3-3" /></svg></button>
        <button aria-label="확대경"><svg viewBox="0 0 16 16"><circle cx="7" cy="6" r="4" /><path d="M10 9l4 5" stroke-width="2" /></svg></button>
        <button aria-label="축소"><svg viewBox="0 0 16 16"><path d="M3 8h10" stroke-width="2" /></svg></button>
        <button aria-label="확대"><svg viewBox="0 0 16 16"><path d="M3 8h10M8 3v10" stroke-width="2" /></svg></button>
        <button class="letter" aria-label="자동">A</button>
      </div>
    </footer>
  </main>
</div>

<style>
  :global(body) {
    background: #000;
  }
  .window {
    display: flex;
    flex-direction: column;
    box-sizing: border-box;
    height: 100vh;
    padding: 1px 1px 3px;
    background: #000;
    font: 12px/14px "Liberation Sans", "Noto Sans CJK KR", sans-serif;
    color: #000;
  }
  button,
  input,
  select {
    box-sizing: border-box;
    margin: 0;
    padding: 0;
    font: inherit;
    color: inherit;
    border-radius: 0;
  }
  button svg {
    display: block;
    width: 16px;
    height: 16px;
    margin: 0 auto;
    fill: none;
    stroke: #666;
  }
  .solid {
    fill: currentColor;
  }
  .title {
    display: flex;
    align-items: center;
    height: 24px;
    padding: 0 4px;
    background: #3a5692;
    color: #fff;
  }
  .badge {
    width: 11px;
    margin-right: 5px;
    border: 1px solid #c8d2ea;
    border-radius: 3px;
    text-align: center;
    font-weight: bold;
  }
  h1 {
    display: flex;
    flex: 1;
    gap: 8px;
    margin: 0;
    font-size: 13px;
    font-weight: normal;
    white-space: nowrap;
  }
  .winButtons {
    display: flex;
    align-items: center;
    gap: 5px;
    color: #b4c0da;
  }
  .winButtons button {
    width: 14px;
    border: 0;
    background: none;
  }
  .winButtons svg {
    width: 14px;
    height: 14px;
    stroke: #b4c0da;
  }
  .winButtons i {
    width: 1px;
    height: 14px;
    background: #8b93a5;
  }
  .winButtons .letter,
  .marks .letter {
    font-weight: bold;
    font-size: 15px;
  }
  .winButtons .serif {
    font-family: "Liberation Serif", serif;
  }
  main {
    display: flex;
    flex: 1;
    flex-direction: column;
    min-height: 0;
    margin: 0 2px;
    padding: 5px 3px 2px;
    background: #d0d0d0;
  }
  .toolbar {
    display: flex;
    gap: 2px;
    height: 20px;
    margin-bottom: 3px;
  }
  .group {
    display: flex;
  }
  .tool {
    width: 19px;
    height: 20px;
    border: 1px solid #8a8a8a;
    background: #ececec;
    color: #222;
    white-space: nowrap;
  }
  .tool + .tool {
    border-left-width: 0;
  }
  .tool svg {
    color: #666;
  }
  .panel {
    width: 18px;
  }
  .arrow {
    width: 13px;
    font-size: 8px;
    color: #555;
  }
  .slim {
    width: 11px;
  }
  .periods .tool {
    display: flex;
    justify-content: center;
    align-items: center;
    overflow: hidden;
  }
  .periods .on {
    background: #4a80c8;
    color: #fff;
  }
  .code {
    width: 54px;
    border: 1px solid #8a8a8a;
    padding-left: 3px;
    background: #fff;
  }
  .name {
    display: flex;
    width: 81px;
    background: linear-gradient(135deg, #fff 90%, #d02030 90%);
    color: #a00050;
  }
  .name b {
    width: 14px;
    border: 2px solid #a04c10;
    background: #0a6660;
    color: #fff;
    font-weight: normal;
    line-height: 16px;
    text-align: center;
  }
  .name span {
    padding-left: 2px;
    line-height: 18px;
  }
  .drop {
    display: flex;
    align-items: center;
    box-sizing: border-box;
    width: 39px;
    border: 1px solid #8a8a8a;
    background: linear-gradient(90deg, #fff 24px, #8a8a8a 24px, #8a8a8a 25px, #ececec 25px);
  }
  .drop select {
    appearance: none;
    width: 24px;
    padding-left: 8px;
    border: 0;
    background: none;
  }
  .drop::after {
    content: "▼";
    width: 13px;
    color: #555;
    font-size: 8px;
    text-align: center;
  }
  .count {
    display: flex;
    align-items: center;
    gap: 1px;
    width: 63px;
    color: #555;
  }
  .count input {
    width: 30px;
    height: 20px;
    border: 1px solid #8a8a8a;
    background: #fff;
    color: #000;
    text-align: right;
  }
  .check {
    display: flex;
    align-items: center;
    gap: 2px;
  }
  .check input {
    appearance: none;
    width: 13px;
    height: 13px;
    border: 1px solid #8a8a8a;
    background: #fff;
  }
  .check input:checked {
    background: #4a80c8;
  }
  .quotes {
    display: flex;
    gap: 2px;
    height: 20px;
    margin-bottom: 3px;
  }
  .cells {
    display: flex;
    box-sizing: border-box;
    width: 750px;
    border: 1px solid #808080;
    background: #f0f0f0;
  }
  .cell {
    display: flex;
    box-sizing: border-box;
    justify-content: flex-end;
    align-items: center;
    margin: 0;
    padding-right: 2px;
    border-right: 1px solid #b4b4b4;
    white-space: nowrap;
  }
  .c1 {
    width: 172px;
    gap: 8px;
  }
  .c1 .tri {
    margin-left: -5px;
    margin-right: 6px;
    font-size: 14px;
  }
  .c2 {
    width: 171px;
    gap: 4px;
  }
  .c2 span:first-child {
    margin-right: 18px;
  }
  .c3 {
    width: 83px;
  }
  .c4 {
    width: 139px;
    gap: 12px;
    padding-right: 4px;
  }
  .c5 {
    flex: 1;
    gap: 8px;
    padding-right: 4px;
    border-right: 0;
  }
  .red {
    color: #e81a0c;
  }
  .blue {
    color: #1848c0;
  }
  .order {
    width: 40px;
    border: 1px solid #8a8a8a;
  }
  .buy {
    background: #f6d0cc;
  }
  .sell {
    background: #c8def4;
  }
  .chart {
    flex: 1;
    width: 100%;
    min-height: 0;
    font-size: 11px;
    shape-rendering: crispEdges;
  }
  .note {
    font-size: 12px;
  }
  .grid path {
    stroke: #d4d4d4;
    stroke-dasharray: 5 4;
  }
  .green {
    fill: none;
    stroke: #0f0;
    stroke-width: 4px;
    stroke-linecap: round;
    stroke-linejoin: round;
  }
  .white {
    fill: none;
    stroke: #fff;
    stroke-dasharray: 5 2;
  }
  .two {
    fill: #d00020;
    font-weight: bold;
  }
  footer {
    display: flex;
    height: 19px;
    background: #f0f0f0;
  }
  .raised {
    width: 17px;
    height: 18px;
    border: 1px solid;
    border-color: #fff #777 #777 #fff;
    background: #f0f0f0;
  }
  .raised svg {
    width: 15px;
    height: 15px;
    fill: #000;
    stroke: none;
  }
  .track {
    flex: 1;
    background: #f7f7f7;
  }
  .thumb {
    box-sizing: border-box;
    width: 97px;
    height: 18px;
    margin-left: 26.6%;
    border: 1px solid;
    border-color: #fff #777 #777 #fff;
    background: #f0f0f0;
  }
  .speed {
    width: 70px;
    padding: 0 6px;
  }
  .speed input {
    display: block;
    appearance: none;
    width: 100%;
    height: 12px;
    background: linear-gradient(#999, #999) center / 100% 2px no-repeat;
  }
  .speed input::-webkit-slider-thumb {
    appearance: none;
    width: 5px;
    height: 11px;
    border: 1px solid #888;
    background: #fff;
  }
  .speed svg {
    display: block;
    width: 100%;
    height: 3px;
    stroke: #000;
  }
  .marks {
    display: flex;
  }
  .marks button {
    width: 17px;
    border: 0;
    background: none;
    color: #555;
  }
  .marks .pressed {
    background: #fff;
    box-shadow: inset 1px 1px #aaa;
  }
</style>
